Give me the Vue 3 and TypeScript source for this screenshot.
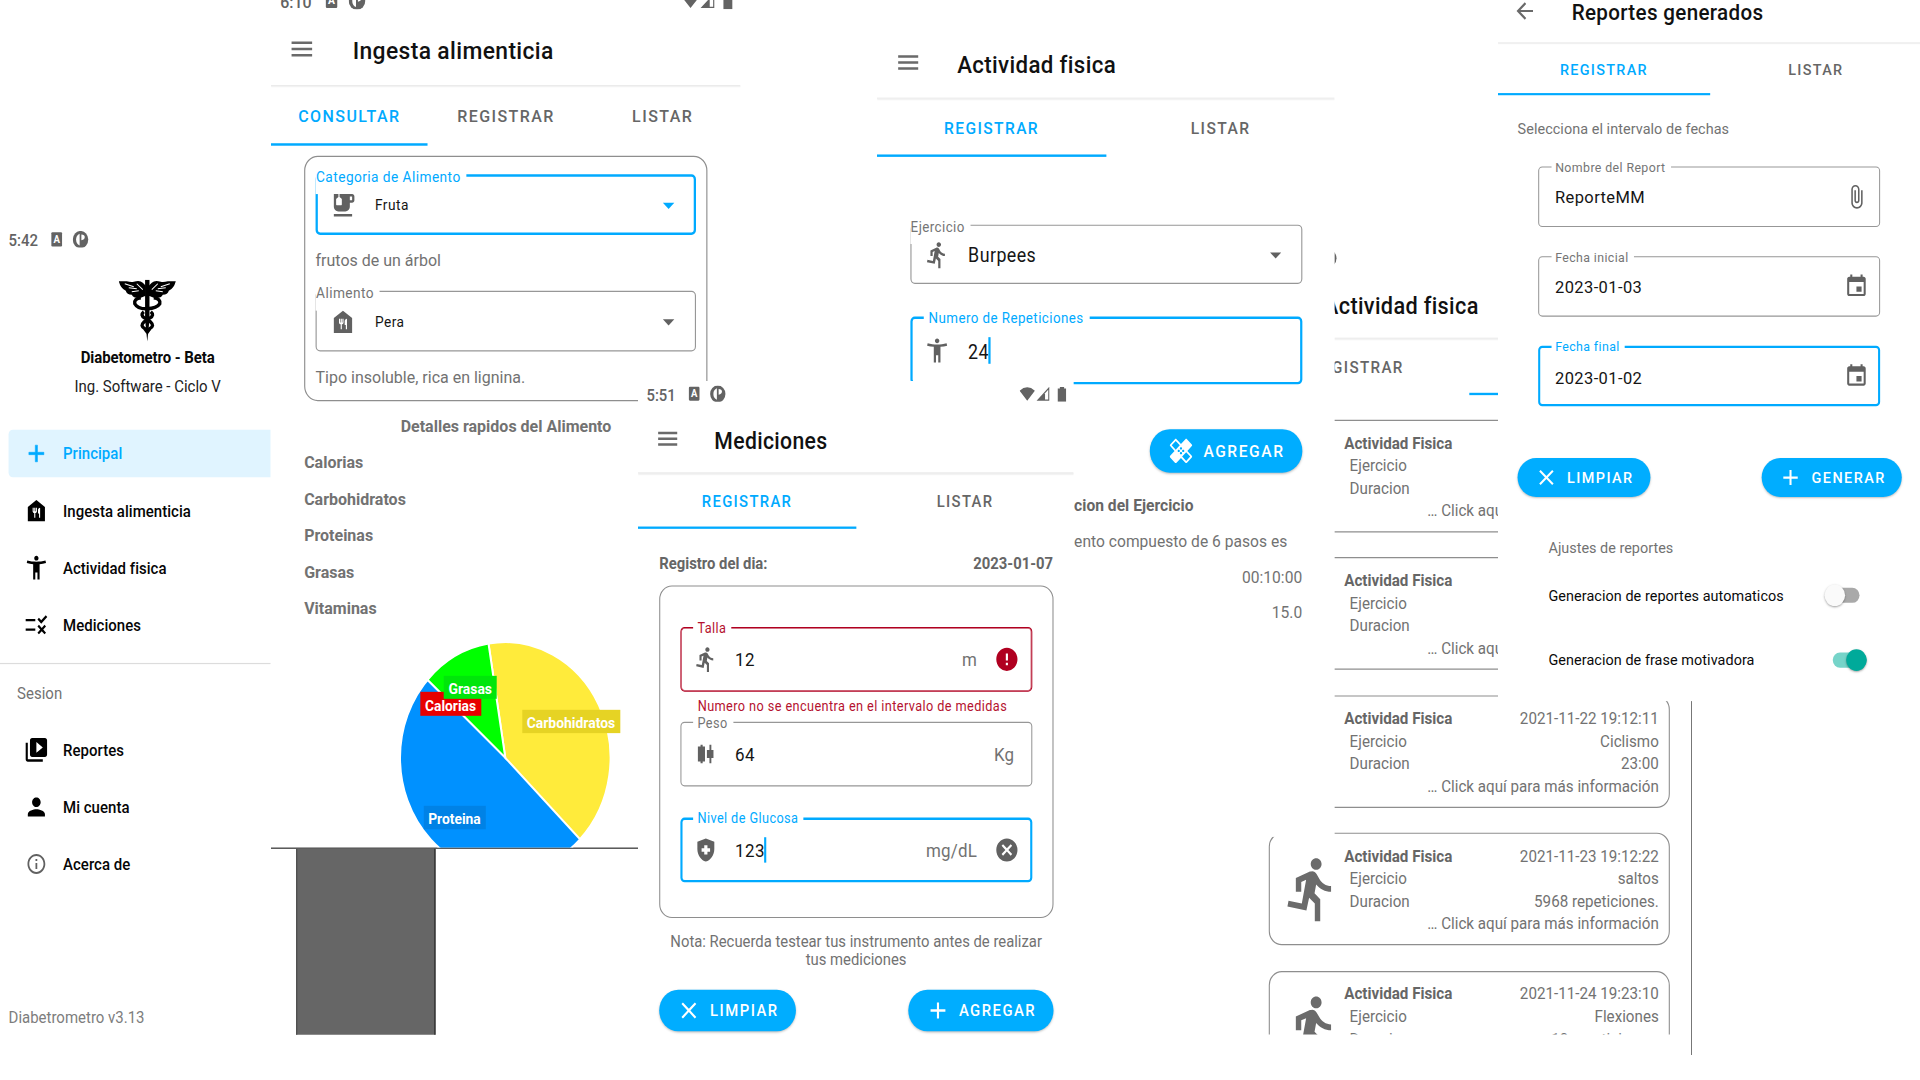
<script setup lang="ts">
type Tone = 'plain' | 'active' | 'error'

interface Field {
  label: string
  value: string
  tone: Tone
  icon?: string
  suffix?: string
  trail?: string
  helper?: string
  caret?: boolean
}

interface Activity {
  date: string
  exercise: string
  duration: string
}

const icons: Record<string, string> = {
  menu: 'M3 18h18v-2H3v2zm0-5h18v-2H3v2zm0-7v2h18V6H3z',
  back: 'M20 11H7.83l5.59-5.59L12 4l-8 8 8 8 1.41-1.41L7.83 13H20v-2z',
  add: 'M19 13h-6v6h-2v-6H5v-2h6V5h2v6h6v2z',
  close: 'M19 6.41L17.59 5 12 10.59 6.41 5 5 6.41 10.59 12 5 17.59 6.41 19 12 13.41 17.59 19 19 17.59 13.41 12z',
  food: 'M12 3L4 9v12h16V9L12 3zM12.5 12.5c0 .83-.67 1.5-1.5 1.5v4h-1v-4c-.83 0-1.5-.67-1.5-1.5v-3h1v3h.5v-3h1v3h.5v-3h1v3zM15.5 18h-1v-3.5h-1v-3c0-1.1.9-2 2-2V18z',
  person_arms: 'M20.5 6c-2.61.7-5.67 1-8.5 1s-5.89-.3-8.5-1L3 8c1.86.5 4 .83 6 1v13h2v-6h2v6h2V9c2-.17 4.14-.5 6-1l-.5-2zM12 6c1.1 0 2-.9 2-2s-.9-2-2-2-2 .9-2 2 .9 2 2 2z',
  rule: 'M16.54 11L13 7.46l1.41-1.41 2.12 2.12 4.24-4.24 1.41 1.41L16.54 11zM11 7H2v2h9V7zm10 6.41L19.59 12 17 14.59 14.41 12 13 13.41 15.59 16 13 18.59 14.41 20 17 17.41 19.59 20 21 18.59 18.41 16 21 13.41zM11 15H2v2h9v-2z',
  library: 'M4 6H2v14c0 1.1.9 2 2 2h14v-2H4V6zm16-4H8c-1.1 0-2 .9-2 2v12c0 1.1.9 2 2 2h12c1.1 0 2-.9 2-2V4c0-1.1-.9-2-2-2zm-8 12.5v-9l6 4.5-6 4.5z',
  person: 'M12 12c2.21 0 4-1.79 4-4s-1.79-4-4-4-4 1.79-4 4 1.79 4 4 4zm0 2c-2.67 0-8 1.34-8 4v2h16v-2c0-2.66-5.33-4-8-4z',
  info: 'M11 7h2v2h-2V7zm0 4h2v6h-2v-6zm1-9C6.48 2 2 6.48 2 12s4.48 10 10 10 10-4.48 10-10S17.52 2 12 2zm0 18c-4.41 0-8-3.59-8-8s3.59-8 8-8 8 3.59 8 8-3.59 8-8 8z',
  cup: 'M20 3H9v2.4l1.81 1.45c.12.09.19.24.19.39v4.26c0 .28-.22.5-.5.5h-4c-.28 0-.5-.22-.5-.5V7.24c0-.15.07-.3.19-.39L8 5.4V3H4v10c0 2.21 1.79 4 4 4h6c2.21 0 4-1.79 4-4v-3h2c1.11 0 2-.89 2-2V5c0-1.11-.89-2-2-2zm0 5h-2V5h2v3zM4 19h16v2H4z',
  run: 'M13.49 5.48c1.1 0 2-.9 2-2s-.9-2-2-2-2 .9-2 2 .9 2 2 2zm-3.6 13.9l1-4.4 2.1 2v6h2v-7.5l-2.1-2 .6-3c1.3 1.5 3.3 2.5 5.5 2.5v-2c-1.9 0-3.5-1-4.3-2.4l-1-1.6c-.4-.6-1-1-1.7-1-.3 0-.5.1-.8.1l-5.2 2.2v4.7h2v-3.4l1.8-.7-1.6 8.1-4.9-1-.4 2 7 1.4z',
  candles: 'M9 4H7v1.5H4.5v13H7V20h2v-1.500h2.200v-13H9V4zm10.200 4.500h-2V4h-1.800v4.500H13v7h2.400V20h1.800v-4.500h2v-7z',
  shield: 'M10.5 13.500H8v-3h2.500V8h3v2.500H16v3h-2.500V16h-3v-2.500zM12 2L4 5v6.090c0 5.050 3.410 9.760 8 10.910 4.590-1.150 8-5.860 8-10.910V5l-8-3z',
  cancel: 'M12 2C6.470 2 2 6.470 2 12s4.470 10 10 10 10-4.470 10-10S17.530 2 12 2zm5 13.590L15.590 17 12 13.410 8.410 17 7 15.590 10.590 12 7 8.410 8.410 7 12 10.590 15.590 7 17 8.410 13.410 12 17 15.590z',
  error: 'M12 2C6.480 2 2 6.480 2 12s4.480 10 10 10 10-4.480 10-10S17.520 2 12 2zm1 15h-2v-2h2v2zm0-4h-2V7h2v6z',
  clip: 'M16.5 6v11.500c0 2.210-1.790 4-4 4s-4-1.790-4-4V5c0-1.380 1.120-2.500 2.500-2.500s2.500 1.120 2.500 2.500v10.500c0 .550-.450 1-1 1s-1-.450-1-1V6H10v9.500c0 1.380 1.120 2.500 2.500 2.500s2.500-1.120 2.500-2.500V5c0-2.210-1.790-4-4-4S7 2.790 7 5v12.500c0 3.040 2.460 5.500 5.500 5.500s5.500-2.460 5.500-5.500V6h-1.500z',
  event: 'M17 12h-5v5h5v-5zM16 1v2H8V1H6v2H5c-1.110 0-1.990.900-1.990 2L3 19c0 1.100.890 2 2 2h14c1.100 0 2-.900 2-2V5c0-1.100-.900-2-2-2h-1V1h-2zm3 18H5V8h14v11z',
  healing: 'M17.730 12.020l3.980-3.980c.390-.390.390-1.020 0-1.410l-4.340-4.340c-.390-.390-1.020-.390-1.410 0l-3.980 3.980L8 2.290C7.800 2.100 7.550 2 7.290 2c-.250 0-.510.100-.700.290L2.250 6.630c-.390.390-.390 1.020 0 1.410l3.980 3.980L2.250 16c-.390.390-.390 1.020 0 1.410l4.340 4.340c.390.390 1.020.390 1.410 0l3.980-3.980 3.980 3.980c.200.200.450.290.710.290.260 0 .510-.100.710-.290l4.340-4.340c.390-.390.390-1.020 0-1.410l-3.990-3.980zM12 9c.550 0 1 .450 1 1s-.450 1-1 1-1-.450-1-1 .450-1 1-1zm-4.710 1.960L3.660 7.340l3.630-3.630 3.620 3.620-3.620 3.630zM10 13c-.550 0-1-.450-1-1s.450-1 1-1 1 .450 1 1-.450 1-1 1zm2 2c-.550 0-1-.450-1-1s.450-1 1-1 1 .450 1 1-.450 1-1 1zm2-4c.550 0 1 .450 1 1s-.450 1-1 1-1-.450-1-1 .450-1 1-1zm2.660 9.340l-3.630-3.620 3.630-3.630 3.620 3.620-3.620 3.630z',
  caret: 'M7 10l5 5 5-5z',
}

const mainMenu = [
  { icon: 'add', label: 'Principal', active: true },
  { icon: 'food', label: 'Ingesta alimenticia', active: false },
  { icon: 'person_arms', label: 'Actividad fisica', active: false },
  { icon: 'rule', label: 'Mediciones', active: false },
]

const sessionMenu = [
  { icon: 'library', label: 'Reportes' },
  { icon: 'person', label: 'Mi cuenta' },
  { icon: 'info', label: 'Acerca de' },
]

const nutrients = ['Calorias', 'Carbohidratos', 'Proteinas', 'Grasas', 'Vitaminas']

const measures: Field[] = [
  { label: 'Talla', value: '12', tone: 'error', icon: 'run', suffix: 'm', trail: 'error', helper: 'Numero no se encuentra en el intervalo de medidas' },
  { label: 'Peso', value: '64', tone: 'plain', icon: 'candles', suffix: 'Kg' },
  { label: 'Nivel de Glucosa', value: '123', tone: 'active', icon: 'shield', suffix: 'mg/dL', trail: 'cancel', caret: true },
]

const reportFields: Field[] = [
  { label: 'Nombre del Report', value: 'ReporteMM', tone: 'plain', trail: 'clip' },
  { label: 'Fecha inicial', value: '2023-01-03', tone: 'plain', trail: 'event' },
  { label: 'Fecha final', value: '2023-01-02', tone: 'active', trail: 'event' },
]

const activities: Activity[] = [
  { date: '', exercise: '', duration: '' },
  { date: '', exercise: '', duration: '' },
  { date: '2021-11-22 19:12:11', exercise: 'Ciclismo', duration: '23:00' },
  { date: '2021-11-23 19:12:22', exercise: 'saltos', duration: '5968 repeticiones.' },
  { date: '2021-11-24 19:23:10', exercise: 'Flexiones', duration: '10 repeticiones.' },
]
</script>

<template>
  <main class="board">
    <!-- Navigation drawer -->
    <section class="screen drawer">
      <div class="status">
        <span class="clock">5:42</span>
        <span class="badge">A</span>
        <svg class="disc" viewBox="0 0 14 14"><circle cx="7" cy="7" r="7" /><path class="w" d="M6.200 2.200v9.600Q3 10.500 3 7t3.200-4.800z" /><path class="w" d="M7.800 2.800q3 0 3 2.200t-3 2.600z" /></svg>
      </div>
      <div class="drawer-head">
        <svg class="logo" viewBox="0 0 57 62" preserveAspectRatio="none">
          <path d="M0 1.500h8q4 1 7 .5q6-2 9 1l3 3v10l-5 2q-7 1-9-3q-5 0-6-4q-5-2-7-9.500zM57 1.500h-8q-4 1-7 .5q-6-2-9 1l-3 3v10l5 2q7 1 9-3q5 0 6-4q5-2 7-9.500z" />
          <path class="feather" d="M6 4l9 3M10 8l8 1M13 12l7-1M18 4l6 6M51 4l-9 3M47 8l-8 1M44 12l-7-1M39 4l-6 6" />
          <path d="M26.300 0h4.400v40l-2.200 22l-2.200-22z" />
          <path class="snake" d="M22 18q-7 1-6 6q3 5.500 12.500 5T41 24q1-5-6-6M25 32q-4 3.500 1 6.500l6 4q4 3.500-1 6.500l-3 4M32 32q4 3.500-1 6.500l-6 4q-4 3.500 1 6.500l3 4" />
        </svg>
        <strong>Diabetometro - Beta</strong>
        <span>Ing. Software - Ciclo V</span>
      </div>
      <nav class="menu-list">
        <div v-for="m in mainMenu" :key="m.label" class="menu-item" :class="{ on: m.active }">
          <svg class="ic" viewBox="0 0 24 24"><path :d="icons[m.icon]" /></svg>
          <span>{{ m.label }}</span>
        </div>
      </nav>
      <hr class="rule-line" />
      <p class="group">Sesion</p>
      <nav class="menu-list">
        <div v-for="m in sessionMenu" :key="m.label" class="menu-item">
          <svg class="ic" :class="m.icon" viewBox="0 0 24 24"><path :d="icons[m.icon]" /></svg>
          <span>{{ m.label }}</span>
        </div>
      </nav>
      <p class="version">Diabetrometro v3.13</p>
    </section>

    <!-- Food intake -->
    <section class="screen intake">
      <div class="status">
        <span class="clock">6:10</span>
        <span class="badge">A</span>
        <svg class="disc" viewBox="0 0 14 14"><circle cx="7" cy="7" r="7" /><path class="w" d="M6.200 2.200v9.600Q3 10.500 3 7t3.200-4.800z" /><path class="w" d="M7.800 2.800q3 0 3 2.200t-3 2.600z" /></svg>
        <svg class="signals" viewBox="0 0 44 13"><path d="M0 3.500Q7.200-2.500 14.400 3.500L7.200 12zM16 12L28 0v12z" /><path class="w" d="M24 5.500L27 2.500V11h-3z" /><path d="M36 1.500h2V.3h4v1.200h2V13h-8z" /></svg>
      </div>
      <header class="bar">
        <svg class="ic" viewBox="0 0 24 24"><path :d="icons.menu" /></svg>
        <h1>Ingesta alimenticia</h1>
      </header>
      <div class="tabs"><span class="on">CONSULTAR</span><span>REGISTRAR</span><span>LISTAR</span></div>
      <div class="card food-card">
        <div class="field select active">
          <label>Categoria de Alimento</label>
          <svg class="ic" viewBox="0 0 24 24"><path :d="icons.cup" /></svg>
          <span class="value small">Fruta</span>
          <svg class="ic drop" viewBox="0 0 24 24"><path :d="icons.caret" /></svg>
        </div>
        <p class="hint">frutos de un árbol</p>
        <div class="field select plain">
          <label>Alimento</label>
          <svg class="ic" viewBox="0 0 24 24"><path :d="icons.food" /></svg>
          <span class="value small">Pera</span>
          <svg class="ic drop" viewBox="0 0 24 24"><path :d="icons.caret" /></svg>
        </div>
        <p class="hint">Tipo insoluble, rica en lignina.</p>
      </div>
      <h2 class="details">Detalles rapidos del Alimento</h2>
      <ul class="nutrients">
        <li v-for="n in nutrients" :key="n">{{ n }}</li>
      </ul>
      <svg class="pie" viewBox="271 627 470 221" preserveAspectRatio="none">
        <g class="slices">
          <ellipse fill="#0091ff" cx="505.300" cy="758" rx="105.300" ry="115.700" />
          <path fill="#ffeb3b" d="M505.300 758L488.500 643.800A105.300 115.700 0 0 1 580 839.500z" />
          <path fill="#00ff00" d="M505.300 758L427.500 680A105.300 115.700 0 0 1 488.500 643.800z" />
        </g>
        <rect x="420.300" y="692" width="61" height="24" fill="#e80000" />
        <rect x="443.700" y="676" width="53" height="23" fill="#00e60a" />
        <rect x="522.300" y="710" width="98" height="23.300" fill="#e6d324" />
        <rect x="423.800" y="806" width="62" height="23.500" fill="#0082e6" />
        <g class="slice-names">
          <text x="425" y="711.500" textLength="51" lengthAdjust="spacingAndGlyphs">Calorias</text>
          <text x="448.500" y="694.300" textLength="43.500" lengthAdjust="spacingAndGlyphs">Grasas</text>
          <text x="526.700" y="728.500" textLength="88.500" lengthAdjust="spacingAndGlyphs">Carbohidratos</text>
          <text x="428.200" y="824.500" textLength="52.500" lengthAdjust="spacingAndGlyphs">Proteina</text>
        </g>
      </svg>
      <div class="column-chart"><div class="column"></div></div>
    </section>

    <!-- Activity log -->
    <section class="screen log">
      <div class="status">
        <svg class="disc" viewBox="0 0 14 14"><circle cx="7" cy="7" r="7" /></svg>
      </div>
      <header class="bar">
        <svg class="ic" viewBox="0 0 24 24"><path :d="icons.menu" /></svg>
        <h1>Actividad fisica</h1>
      </header>
      <div class="tabs"><span>REGISTRAR</span><span class="on"></span></div>
      <div class="log-list">
        <article v-for="(a, i) in activities" :key="i" class="card entry">
          <svg class="runner" viewBox="0 0 24 24"><path :d="icons.run" /></svg>
          <div class="entry-text">
            <p><b>Actividad Fisica</b><span>{{ a.date }}</span></p>
            <p class="in"><span>Ejercicio</span><span>{{ a.exercise }}</span></p>
            <p class="in"><span>Duracion</span><span>{{ a.duration }}</span></p>
            <p class="more">… Click aquí para más información</p>
          </div>
        </article>
      </div>
    </section>
    <div class="log-edge"></div>

    <!-- Activity form -->
    <section class="screen activity">
      <div class="status"></div>
      <header class="bar">
        <svg class="ic" viewBox="0 0 24 24"><path :d="icons.menu" /></svg>
        <h1>Actividad fisica</h1>
      </header>
      <div class="tabs"><span class="on">REGISTRAR</span><span>LISTAR</span></div>
      <div class="activity-form">
        <div class="field select plain">
          <label>Ejercicio</label>
          <svg class="ic" viewBox="0 0 24 24"><path :d="icons.run" /></svg>
          <span class="value">Burpees</span>
          <svg class="ic drop" viewBox="0 0 24 24"><path :d="icons.caret" /></svg>
        </div>
        <div class="field active">
          <label>Numero de Repeticiones</label>
          <svg class="ic" viewBox="0 0 24 24"><path :d="icons.person_arms" /></svg>
          <span class="value">24</span><i class="cursor"></i>
        </div>
        <div class="actions">
          <button class="pill"><svg class="ic" viewBox="0 0 24 24"><path :d="icons.healing" /></svg>AGREGAR</button>
        </div>
      </div>
      <div class="activity-info">
        <p><b>cion del Ejercicio</b></p>
        <p>ento compuesto de 6 pasos es</p>
        <p class="end">00:10:00</p>
        <p class="end">15.0</p>
      </div>
    </section>

    <!-- Measurements -->
    <section class="screen measures">
      <div class="status">
        <span class="clock">5:51</span>
        <span class="badge">A</span>
        <svg class="disc" viewBox="0 0 14 14"><circle cx="7" cy="7" r="7" /><path class="w" d="M6.200 2.200v9.600Q3 10.500 3 7t3.200-4.800z" /><path class="w" d="M7.800 2.800q3 0 3 2.200t-3 2.600z" /></svg>
        <svg class="signals" viewBox="0 0 44 13"><path d="M0 3.500Q7.200-2.500 14.400 3.500L7.200 12zM16 12L28 0v12z" /><path class="w" d="M24 5.500L27 2.500V11h-3z" /><path d="M36 1.500h2V.3h4v1.200h2V13h-8z" /></svg>
      </div>
      <header class="bar">
        <svg class="ic" viewBox="0 0 24 24"><path :d="icons.menu" /></svg>
        <h1>Mediciones</h1>
      </header>
      <div class="tabs"><span class="on">REGISTRAR</span><span>LISTAR</span></div>
      <div class="measures-body">
        <p class="day"><b>Registro del dia:</b><b>2023-01-07</b></p>
        <div class="card measures-card">
          <div v-for="f in measures" :key="f.label" class="slot">
            <div class="field" :class="f.tone">
              <label>{{ f.label }}</label>
              <svg class="ic" viewBox="0 0 24 24"><path :d="icons[f.icon ?? 'run']" /></svg>
              <span class="value">{{ f.value }}</span><i v-if="f.caret" class="cursor"></i>
              <span class="suffix">{{ f.suffix }}</span>
              <svg v-if="f.trail" class="ic trail" :class="f.trail" viewBox="0 0 24 24"><path :d="icons[f.trail]" /></svg>
            </div>
            <p v-if="f.helper" class="helper">{{ f.helper }}</p>
          </div>
        </div>
        <p class="note">Nota: Recuerda testear tus instrumento antes de realizar<br />tus mediciones</p>
        <div class="actions">
          <button class="pill"><svg class="ic" viewBox="0 0 24 24"><path :d="icons.close" /></svg>LIMPIAR</button>
          <button class="pill"><svg class="ic" viewBox="0 0 24 24"><path :d="icons.add" /></svg>AGREGAR</button>
        </div>
      </div>
    </section>

    <!-- Reports -->
    <section class="screen reports">
      <div class="status"></div>
      <header class="bar">
        <svg class="ic" viewBox="0 0 24 24"><path :d="icons.back" /></svg>
        <h1>Reportes generados</h1>
      </header>
      <div class="tabs"><span class="on">REGISTRAR</span><span>LISTAR</span></div>
      <div class="reports-body">
        <p class="lead">Selecciona el intervalo de fechas</p>
        <div class="report-fields">
          <div v-for="f in reportFields" :key="f.label" class="field" :class="f.tone">
            <label>{{ f.label }}</label>
            <span class="value">{{ f.value }}</span>
            <svg class="ic drop" viewBox="0 0 24 24"><path :d="icons[f.trail ?? 'event']" /></svg>
          </div>
        </div>
        <div class="actions">
          <button class="pill"><svg class="ic" viewBox="0 0 24 24"><path :d="icons.close" /></svg>LIMPIAR</button>
          <button class="pill"><svg class="ic" viewBox="0 0 24 24"><path :d="icons.add" /></svg>GENERAR</button>
        </div>
        <div class="settings">
          <p class="settings-title">Ajustes de reportes</p>
          <div class="setting"><span>Generacion de reportes automaticos</span><i class="switch off"></i></div>
          <div class="setting"><span>Generacion de frase motivadora</span><i class="switch on"></i></div>
        </div>
      </div>
    </section>
  </main>
</template>

<style>
html,
body {
  margin: 0;
  background: #fff;
  overflow: hidden;
}
</style>

<style scoped>
.board {
  position: relative;
  width: 1920px;
  height: 1080px;
  overflow: hidden;
  background: #fff;
  font-family: Roboto, 'Liberation Sans', sans-serif;
  font-size: 14px;
  color: #727272;
}
.board * {
  box-sizing: border-box;
}
p,
h1,
h2,
ul,
hr {
  margin: 0;
  padding: 0;
}
p {
  line-height: 20px;
}

/* Phone screens, laid out in dp and scaled onto the board */
.screen {
  position: absolute;
  width: 411.400px;
  overflow: hidden;
  background: #fff;
  transform-origin: 0 0;
  white-space: nowrap;
}
.drawer {
  left: 0;
  top: 224.600px;
  width: 253.300px;
  height: 690px;
  transform: scale(1.070, 1.190);
}
.intake {
  left: 271px;
  top: -13.200px;
  height: 845.300px;
  transform: scale(1.1425, 1.240);
}
.log {
  left: 1246px;
  top: 245px;
  height: 672.700px;
  transform: scale(1.084, 1.173);
}
.log-edge {
  position: absolute;
  left: 1691px;
  top: 701px;
  width: 1px;
  height: 354px;
  background: #777;
}
.activity {
  left: 877px;
  top: 1.600px;
  height: 690.400px;
  transform: scale(1.1135, 1.210);
}
.measures {
  left: 638px;
  top: 381px;
  height: 570px;
  transform: scale(1.060, 1.155);
}
.reports {
  left: 1498px;
  top: -43.100px;
  height: 689px;
  transform: scale(1.030, 1.080);
}

/* Status bar */
.status {
  height: 24px;
  display: flex;
  align-items: center;
  padding: 0 7px 2px 8px;
}
.drawer .status {
  padding-bottom: 0;
}
.status svg {
  fill: #636363;
}
.clock {
  width: 40px;
  color: #636363;
  font-size: 14px;
  font-weight: 500;
  padding-top: 1px;
}
.badge {
  width: 10px;
  height: 11.500px;
  border-radius: 1px;
  background: #636363;
  color: #fff;
  font-size: 9px;
  font-weight: 700;
  line-height: 12px;
  text-align: center;
}
.disc {
  width: 14.500px;
  height: 14.500px;
  margin-left: 10px;
}
svg .w {
  fill: #fff;
}
.signals {
  width: 44px;
  height: 13px;
  margin-left: auto;
}
.log .status {
  padding-bottom: 1px;
}
.log .disc {
  margin-left: 61px;
}

/* App bar and tabs */
.ic {
  width: 24px;
  height: 24px;
  fill: #616161;
  fill-rule: evenodd;
  flex: none;
}
.bar {
  position: relative;
  height: 56px;
  display: flex;
  align-items: center;
  padding: 0 16px;
  gap: 32px;
  border-bottom: 1px solid #ebebeb;
  box-shadow: 0 1px 1px rgba(0, 0, 0, 0.060);
}
.bar .ic {
  margin-left: -1px;
  margin-right: 1px;
  margin-bottom: 3px;
  fill: #6a6a6a;
}
.activity .bar .ic,
.measures .bar .ic {
  margin-left: 0;
  margin-right: 0;
}
.reports .bar .ic {
  margin-left: -2px;
  margin-right: 2px;
}
h1 {
  font-size: 20px;
  font-weight: 500;
  letter-spacing: 0.320px;
  line-height: 28px;
  color: #111;
}
.intake h1,
.reports h1 {
  margin: 0 0 1px -0.500px;
}
.measures h1,
.log h1 {
  margin-top: 1px;
}
.tabs {
  height: 48px;
  display: flex;
}
.tabs span {
  flex: 1;
  display: flex;
  align-items: center;
  justify-content: center;
  border-bottom: 2px solid transparent;
  padding-top: 2px;
  font-weight: 500;
  letter-spacing: 1.250px;
  color: #666;
}
.tabs .on {
  color: #00aaff;
  border-color: #00aaff;
}

/* Outlined cards, fields and buttons */
.card {
  border: 1px solid #8e8e8e;
  border-radius: 12px;
}
.field {
  position: relative;
  height: 56px;
  display: flex;
  align-items: center;
  padding: 0 11px;
  border: 1px solid #979797;
  border-radius: 4px;
}
.field .ic {
  position: relative;
  z-index: 1;
}
.field label {
  position: absolute;
  left: 11.500px;
  top: -10px;
  height: 20px;
  padding: 0 5px 0 4px;
  background: #fff;
  font-size: 12px;
  line-height: 20px;
  letter-spacing: 0.380px;
  color: #757575;
}
.field.active {
  border: 2px solid #00aaff;
  padding: 0 10px;
}
.field.error {
  border: 1px solid #b00020;
  box-shadow: inset 0 0 0 0.500px #b00020;
}
.field.active label {
  top: -11px;
  left: 10.500px;
  color: #00aaff;
}
.field.error label {
  color: #b5122f;
}
.field.select {
  height: 49px;
}
.field.select label {
  left: -1px;
  top: -9px;
  height: 24px;
  line-height: 20px;
  padding: 0 5px 0 0.400px;
}
.field.select.active label {
  left: -2px;
  top: -10px;
}
.field.select.active .drop {
  fill: #00aaff;
}
.field .ic + .value {
  margin-left: 16px;
}
.value {
  padding-top: 2px;
  font-size: 16px;
  letter-spacing: 0.400px;
  color: #151515;
}
.value.small {
  padding-top: 2px;
  font-size: 12px;
}
.field.select .ic {
  top: 0.600px;
}
.drop,
.suffix {
  margin-left: auto;
}
.suffix {
  padding-top: 2px;
  font-size: 16px;
  letter-spacing: 0.200px;
}
.suffix:last-child {
  margin-right: 5px;
}
.trail {
  margin-left: 16px;
}
.trail.error {
  fill: #b00020;
}
.cursor {
  width: 2px;
  height: 22px;
  margin-left: -0.500px;
  background: #00aaff;
}
.actions {
  display: flex;
  justify-content: space-between;
}
.pill {
  height: 36px;
  display: flex;
  align-items: center;
  gap: 8px;
  padding: 0 16px;
  border: 0;
  border-radius: 18px;
  background: #00adff;
  box-shadow: 0 1px 2px rgba(0, 0, 0, 0.250);
  color: #fff;
  font: 500 14px Roboto, 'Liberation Sans', sans-serif;
  letter-spacing: 1.400px;
}
.pill .ic {
  fill: #fff;
}

/* Drawer */
.drawer-head {
  width: 276px;
  height: 148px;
  padding-top: 21.500px;
  display: flex;
  flex-direction: column;
  align-items: center;
  line-height: 20px;
  color: #222;
}
.logo {
  width: 53.300px;
  height: 52px;
  margin-bottom: 3.500px;
}
.logo .feather {
  stroke: #fff;
  stroke-width: 1;
  fill: none;
}
.logo .snake {
  stroke: #000;
  stroke-width: 3.400;
  fill: none;
}
.drawer-head strong {
  color: #0a0a0a;
  margin-bottom: 4px;
  letter-spacing: -0.080px;
}
.menu-list {
  display: flex;
  flex-direction: column;
  gap: 8px;
}
.menu-item {
  height: 40px;
  margin-left: 8px;
  padding-left: 14px;
  display: flex;
  align-items: center;
  gap: 13.400px;
  border-radius: 4px 0 0 4px;
  font-weight: 500;
  letter-spacing: 0.030px;
  color: #060606;
}
.menu-item .ic {
  margin-left: -0.500px;
  fill: #000;
}
.menu-item .ic.info {
  padding: 2px;
  fill: #616161;
}
.menu-item.on {
  background: #e0f4ff;
  color: #00aaff;
}
.menu-item.on .ic {
  fill: #00aaff;
  stroke: #00aaff;
  stroke-width: 0.500;
}
.rule-line {
  margin-top: 12px;
  border: 0;
  height: 1px;
  background: #dcdcdc;
}
.group {
  margin: 14px 0 18px 16px;
}
.version {
  margin: 98.700px 0 0 8px;
  color: #7d7d7d;
}

/* Food intake */
.food-card {
  height: 198px;
  margin: 7.500px 29.500px 0 29px;
  padding: 14px 9px 0;
}
.intake .hint {
  margin: 10.500px 0 14.500px;
}
.details {
  margin-top: 10.700px;
  line-height: 20px;
  font-size: 14px;
  font-weight: 700;
  text-align: center;
}
.nutrients {
  margin: 4.900px 0 0 29px;
  list-style: none;
  font-weight: 700;
  line-height: 29.440px;
}
.nutrients li {
  position: relative;
  top: 0.400px;
}
.pie {
  display: block;
  width: 411.400px;
  height: 178.200px;
}
.slices {
  stroke: #fff;
  stroke-width: 2;
}
.slice-names {
  fill: #fff;
  font-size: 14.500px;
  font-weight: 700;
}
.column-chart {
  border-top: 1px solid #333;
  padding-left: 22px;
}
.column {
  width: 122px;
  height: 152px;
  background: #666;
  border-left: 1px solid #4a4a4a;
  border-right: 1px solid #222;
}

/* Activity log */
.log-list {
  display: flex;
  flex-direction: column;
  gap: 21.400px;
  padding: 21px 20.600px 0;
}
.entry {
  flex: none;
  height: 96px;
  display: flex;
  align-items: center;
  padding: 0 9px;
}
.runner {
  width: 60px;
  height: 60px;
  fill: #6b6b6b;
}
.entry-text {
  flex: 1;
  padding-top: 2px;
}
.entry-text p {
  display: flex;
  justify-content: space-between;
  line-height: 19.200px;
}
.entry-text .in {
  padding-left: 5px;
}
.entry-text .more {
  justify-content: flex-end;
}
b {
  color: #666;
}

/* Activity form */
.activity-form {
  padding: 56.400px 29.400px 0 29.800px;
}
.activity-form .value {
  margin-left: 16.600px;
}
.activity-form .field.active {
  margin-top: 26.700px;
}
.activity-form .actions {
  margin-top: 37px;
  justify-content: flex-end;
}
.activity-info {
  margin: 12.700px 29.500px 0 177px;
}
.activity-info p {
  line-height: 29.440px;
  letter-spacing: 0.020px;
}
.end {
  text-align: right;
}

/* Measurements */
.measures-body {
  padding: 20.200px 19.800px 0 20px;
}
.day {
  display: flex;
  justify-content: space-between;
}
.measures-card {
  height: 287.500px;
  margin-top: 9px;
  padding: 34.800px 18.600px 0;
}
.slot:nth-child(2) {
  margin: 4.700px 0 27.300px;
}
.helper {
  margin: 5px 0 0 16.700px;
  line-height: 16px;
  font-size: 12px;
  letter-spacing: 0.380px;
  color: #b5122f;
}
.note {
  margin: 12.300px 0 17px;
  line-height: 16.400px;
  text-align: center;
}

/* Reports */
.reports-body {
  padding: 20.900px 19px 0;
}
.lead {
  letter-spacing: 0.050px;
}
.report-fields {
  display: flex;
  flex-direction: column;
  gap: 27.300px;
  margin: 24.800px 21px 47.700px 20px;
}
.reports .field {
  padding-left: 15.300px;
  padding-right: 10.400px;
}
.reports .field.active {
  padding-left: 14.300px;
  padding-right: 9.400px;
}
.settings {
  padding: 36.700px 0 0 30px;
}
.setting {
  height: 48px;
  margin: 10px 0 12px;
  display: flex;
  align-items: center;
  color: #0a0a0a;
}
.setting span {
  width: 269px;
  letter-spacing: 0.050px;
}
.switch {
  position: relative;
  width: 33px;
  height: 14px;
  border-radius: 7px;
  background: #a9a9a9;
}
.switch::after {
  content: '';
  position: absolute;
  top: -3px;
  left: -1px;
  width: 20px;
  height: 20px;
  border-radius: 50%;
  background: #fafafa;
  box-shadow: 0 1px 2px rgba(0, 0, 0, 0.350);
}
.switch.on {
  margin-left: 7px;
  background: #76d4c9;
}
.switch.on::after {
  left: 13px;
  background: #00aa9a;
}
</style>
